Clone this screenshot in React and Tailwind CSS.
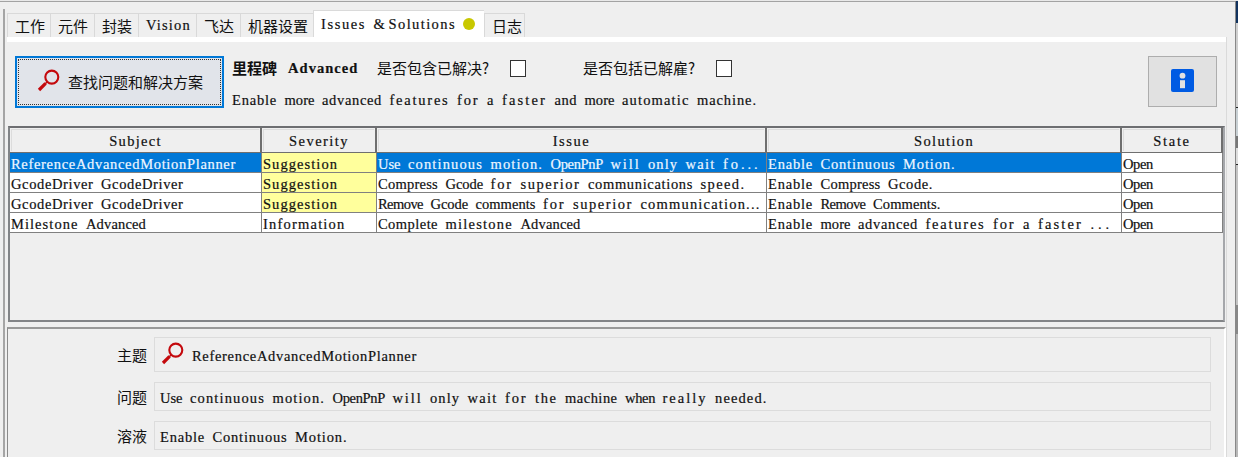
import React from "react";

const ctx = document.createElement("canvas").getContext("2d");

// Fixed-pitch serif text: every word is spaced out to fill its character cells.
function Mono({ children, bold = false }) {
  ctx.font = `${bold ? "bold " : ""}14.5px "Liberation Serif"`;
  const cell = bold ? 8.8 : 7.5;
  return (
    <span className={`whitespace-pre font-['Liberation_Serif',serif] text-[14.5px] [-webkit-text-stroke:0.2px_currentColor] ${bold ? "font-bold" : ""}`}>
      {children.split(/( )/).filter(Boolean).map((part, i) => {
        const gap = cell - ctx.measureText(part).width / part.length;
        return <span key={i} style={{ letterSpacing: `${gap}px` }}>{part}</span>;
      })}
    </span>
  );
}

function Cjk({ children }) {
  return <span className="whitespace-nowrap font-['Noto_Sans_CJK_SC',sans-serif] text-[15px]">{children}</span>;
}

function Search() {
  return (
    <svg className="h-[23px] w-[23px] shrink-0" viewBox="0 0 23 23" fill="none" stroke="#c4090d">
      <circle cx="14.8" cy="8.1" r="6.5" strokeWidth="2.1" />
      <path d="M10 13L8.3 14.7" strokeWidth="1.6" />
      <path d="M8.6 14.4L2 21" strokeWidth="3.2" />
    </svg>
  );
}

function Tab({ className, children }) {
  return (
    <div className={`flex h-[24px] items-center border-l border-t border-[#d9d9d9] pl-[7px] leading-none ${className}`}>
      {children}
    </div>
  );
}

const rows = [
  ["ReferenceAdvancedMotionPlanner", "Suggestion", "Use continuous motion. OpenPnP will only wait fo...", "Enable Continuous Motion.", "Open"],
  ["GcodeDriver GcodeDriver", "Suggestion", "Compress Gcode for superior communications speed.", "Enable Compress Gcode.", "Open"],
  ["GcodeDriver GcodeDriver", "Suggestion", "Remove Gcode comments for superior communication...", "Enable Remove Comments.", "Open"],
  ["Milestone Advanced", "Information", "Complete milestone Advanced", "Enable more advanced features for a faster ...", "Open"],
];
const grid = "grid grid-cols-[252px_115px_390px_355px_101px]";

function cellColor(r, c) {
  if (c === 1 && r < 3) return "bg-[#ffff9c]";
  if (r === 0 && c < 4) return "bg-[#0078d7] text-[#eef6ff]";
  return "bg-white";
}

function Field({ label, height, children }) {
  return (
    <div className="flex items-center">
      <div className="w-[139px] text-right leading-none"><Cjk>{label}</Cjk></div>
      <div className={`ml-[7px] flex w-[1057px] items-center border border-[#dcdcdc] pl-[5px] leading-none ${height}`}>
        {children}
      </div>
    </div>
  );
}

export default function App() {
  return (
    <div className="flex h-[457px] w-[1238px] flex-col overflow-hidden bg-[#efefef] text-[#111]">
      <div className="h-px shrink-0 bg-[#e9e9e9]" />
      <div className="flex min-h-0 flex-1">
        <div className="flex w-[1235px] shrink-0 flex-col border-t border-[#a3a3a3]">
          <div className="h-[7px] shrink-0" />
          <div className="flex min-h-0 flex-1">
            <div className="mr-[2px] ml-[3px] w-[2px] shrink-0 bg-[#a5a5a5]" />
            <div className="flex w-[1220px] shrink-0 flex-col">
              <div className="flex h-[28px] shrink-0 items-end">
                <Tab className="w-[43px]"><Cjk>工作</Cjk></Tab>
                <Tab className="w-[44px]"><Cjk>元件</Cjk></Tab>
                <Tab className="w-[44px]"><Cjk>封装</Cjk></Tab>
                <Tab className="w-[58px]"><Mono>Vision</Mono></Tab>
                <Tab className="w-[44px]"><Cjk>飞达</Cjk></Tab>
                <Tab className="w-[73px]"><Cjk>机器设置</Cjk></Tab>
                <div className="flex h-[27px] w-[171px] items-center border-l border-t border-[#dadada] bg-white pl-[7px] leading-none">
                  <Mono>Issues & Solutions</Mono>
                  <div className="ml-[7px] h-[12px] w-[12px] rounded-full bg-[#c8c800]" />
                </div>
                <Tab className="w-[41px] border-r"><Cjk>日志</Cjk></Tab>
              </div>
              <div className="flex min-h-0 flex-1 flex-col border-r border-[#dadada]">
                <div className="h-[5px] shrink-0 bg-white" />
                <div className="flex h-[84px] shrink-0 pl-[8px] pt-[14px]">
                  <div className="h-[52px] w-[209px] border-2 border-[#0078d7] bg-[#e1e4ea] p-px">
                    <div className="flex h-full items-center border border-dotted border-[#333] pl-[18px] leading-none">
                      <div className="-mt-[4px]"><Search /></div>
                      <div className="-mt-px ml-[8px] flex"><Cjk>查找问题和解决方案</Cjk></div>
                    </div>
                  </div>
                  <div className="ml-[8px] flex w-[917px] flex-col">
                    <div className="flex h-[24px] items-center leading-none">
                      <div className="flex w-[145px] items-center gap-[11px]">
                        <span className="font-bold"><Cjk>里程碑</Cjk></span>
                        <Mono bold>Advanced</Mono>
                      </div>
                      <div className="w-[133px]"><Cjk>是否包含已解决?</Cjk></div>
                      <div className="h-[17px] w-[16px] border border-[#333] bg-white" />
                      <div className="ml-[57px] w-[133px]"><Cjk>是否包括已解雇?</Cjk></div>
                      <div className="h-[17px] w-[16px] border border-[#333] bg-white" />
                    </div>
                    <div className="mt-[11px] leading-none"><Mono>Enable more advanced features for a faster and more automatic machine.</Mono></div>
                  </div>
                  <div className="-ml-px flex h-[51px] w-[69px] items-center justify-center border border-[#adadad] bg-[#e1e1e1]">
                    <svg className="mt-[-2px] h-[23px] w-[23px]" viewBox="0 0 23 23">
                      <rect width="23" height="23" rx="2" fill="#005be3" />
                      <circle cx="11.5" cy="6.7" r="2.9" fill="#e1e1e1" />
                      <rect x="9" y="11.2" width="5" height="8" fill="#e1e1e1" />
                    </svg>
                  </div>
                </div>
                <div className="ml-px h-[196px] w-[1217px] shrink-0 border-2 border-[#828487] border-r-[#a5a7ab] border-t-[#6d6e71]">
                  <div className={`${grid} h-[25px]`}>
                    {["Subject", "Severity", "Issue", "Solution", "State"].map((h) => (
                      <div key={h} className="border-r-2 border-b border-[#6f6f6f] p-px">
                        <div className="flex h-full items-center justify-center border-l border-t border-[#dcdcdc] pt-px leading-none"><Mono>{h}</Mono></div>
                      </div>
                    ))}
                  </div>
                  {rows.map((row, r) => (
                    <div key={r} className={`${grid} h-[20px]`}>
                      {row.map((v, c) => (
                        <div key={c} className={`flex items-center overflow-hidden border-r border-b border-[#808080] pt-[3px] pl-px leading-none ${cellColor(r, c)}`}>
                          <Mono>{v}</Mono>
                        </div>
                      ))}
                    </div>
                  ))}
                </div>
                <div className="mt-[5px] flex flex-1 flex-col border-l border-t-2 border-r-2 border-l-[#8a8a8a] border-t-[#999] border-r-white pt-[8px]">
                  <Field label="主题" height="h-[35px]">
                    <div className="ml-px mr-[8px] mb-px -mt-[2px]"><Search /></div>
                    <div className="pt-[2px]"><Mono>ReferenceAdvancedMotionPlanner</Mono></div>
                  </Field>
                  <div className="h-[10px]" />
                  <Field label="问题" height="h-[29px]">
                    <div className="pt-[2px]"><Mono>Use continuous motion. OpenPnP will only wait for the machine when really needed.</Mono></div>
                  </Field>
                  <div className="h-[10px]" />
                  <Field label="溶液" height="h-[29px]">
                    <div className="pt-[2px]"><Mono>Enable Continuous Motion.</Mono></div>
                  </Field>
                </div>
              </div>
            </div>
          </div>
        </div>
        <div className="flex w-[3px] shrink-0 flex-col border-l border-[#888]">
          <div className="h-[22px] bg-[#12335f]" />
          <div className="h-[84px] bg-[#cfcfcf]" />
          <div className="h-px bg-[#222]" />
          <div className="h-[28px] bg-[#c8d0d4]" />
          <div className="h-[12px] bg-[#777]" />
          <div className="h-[16px] bg-[#ddd]" />
          <div className="h-px bg-[#222]" />
          <div className="h-[140px] bg-[#c4c4c4]" />
          <div className="h-[29px] bg-[#888]" />
          <div className="flex-1 bg-[#b8b8b8]" />
        </div>
      </div>
    </div>
  );
}
